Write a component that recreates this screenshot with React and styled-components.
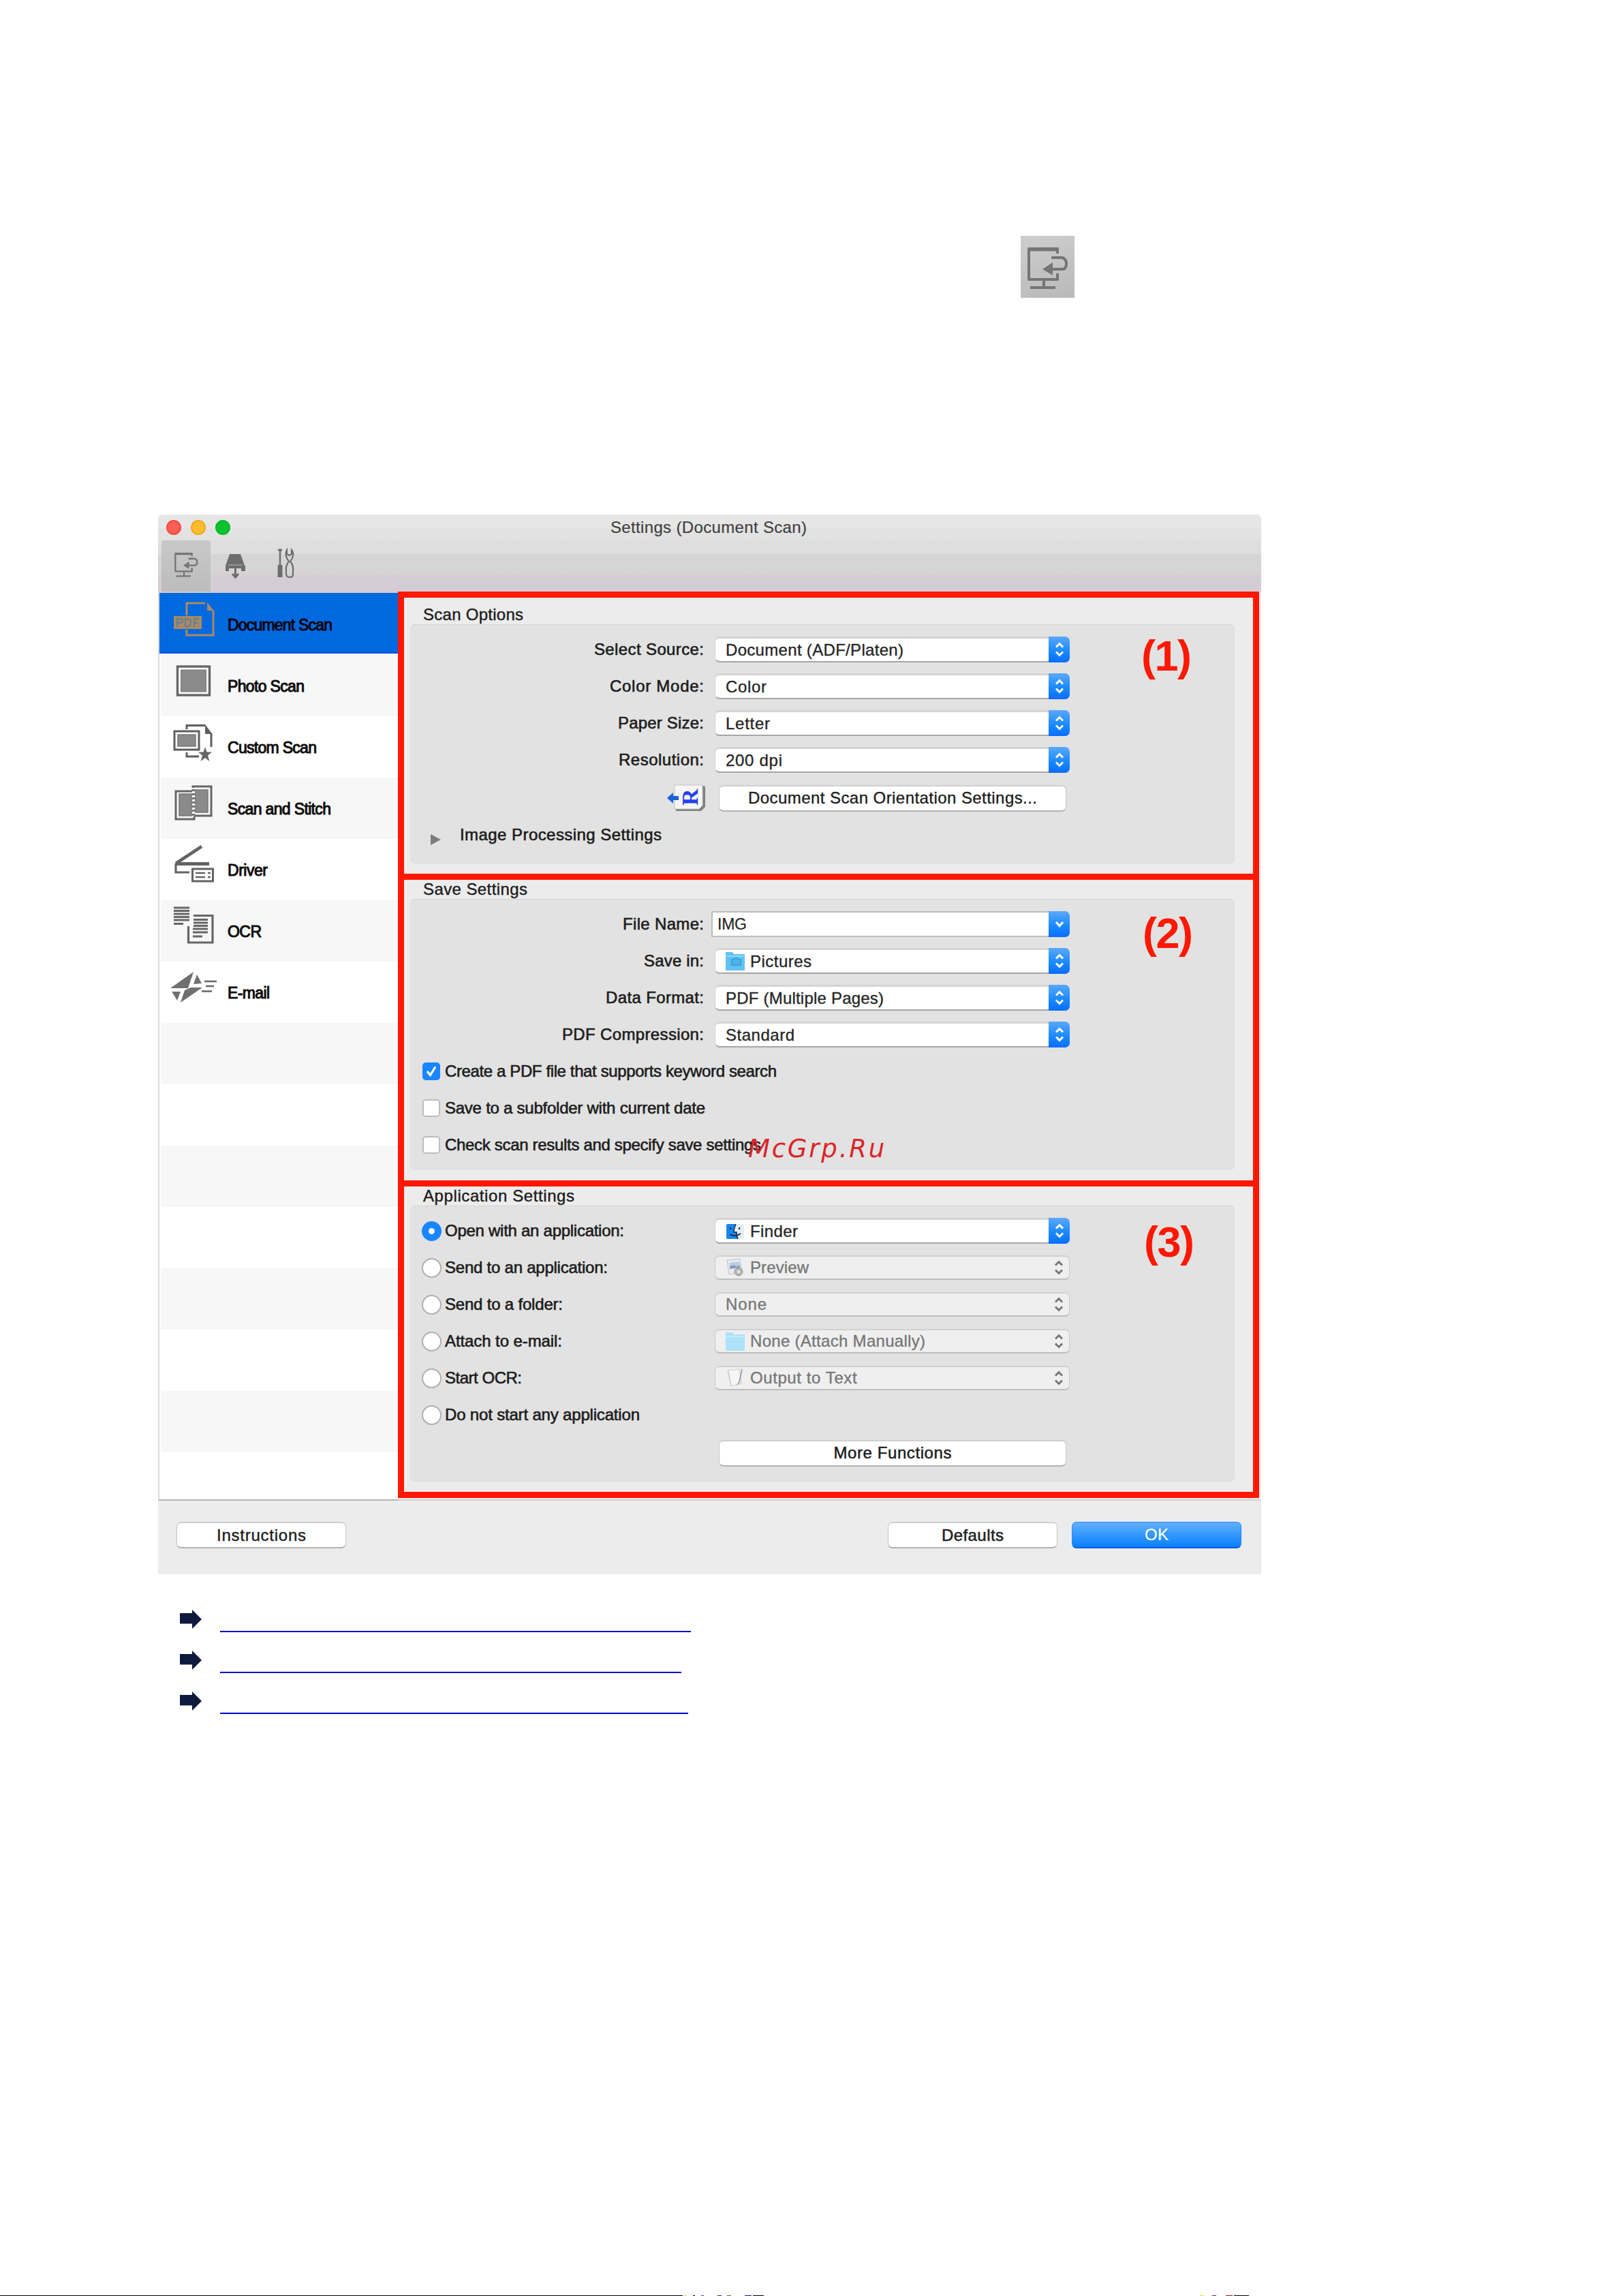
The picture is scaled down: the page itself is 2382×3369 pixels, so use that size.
import React from "react";
import styled, { createGlobalStyle, css } from "styled-components";

const FONT = '"Liberation Sans", Arial, Helvetica, sans-serif';

const Global = createGlobalStyle`
  * { box-sizing: border-box; }
  html, body { margin: 0; padding: 0; background: #fff; }
  body { font-family: ${FONT}; font-size: 24px; color: #1c1c1c; overflow: hidden; }
`;

/* ---------- text tracked to a given measure ---------- */

const pen = document.createElement("canvas").getContext("2d");

function tracking(text, width, size, bold) {
  pen.font = `${bold ? "bold " : ""}${size}px ${FONT}`;
  return (width - pen.measureText(text).width) / Math.max(1, text.length - 1);
}

const TextSpan = styled.span`
  display: block;
  white-space: nowrap;
  font-size: ${(p) => p.$size}px;
  font-weight: ${(p) => (p.$bold ? 700 : 400)};
  line-height: 28px;
  -webkit-text-stroke: ${(p) => p.$stroke}px currentColor;
`;

function Text({ w, size = 24, bold = false, stroke = 0.6, children }) {
  const ls = tracking(children, w, size, bold);
  return (
    <TextSpan $size={size} $bold={bold} $stroke={stroke} style={{ letterSpacing: ls, marginRight: -ls }}>
      {children}
    </TextSpan>
  );
}

/* ---------- page ---------- */

const Page = styled.div`
  width: 2382px;
  height: 3369px;
  display: flex;
  flex-direction: column;
  background: #fff;
`;

const InlineIconRow = styled.div`
  height: 755px;
  padding: 346px 0 0 1498px;
`;

const IconTile = styled.div`
  width: 79px;
  height: 91px;
  background: linear-gradient(160deg, #cecece, #b9b9b9);
`;

const Window = styled.div`
  width: 1619px;
  margin-left: 232px;
  height: 1555px;
  display: flex;
  flex-direction: column;
  background: #ececec;
  border-radius: 7px 7px 2px 2px;
  overflow: hidden;
`;

const Header = styled.div`
  height: 113px;
  background: linear-gradient(
    #e9e9e9 0, #e6e6e6 3px, #e6e6e6 19px, #e2e2e2 21px, #e2e2e2 36px, #dedede 40px,
    #dedede 57px, #d5d5d5 59px, #d5d5d5 84px, #d5cdd5 90px
  );
`;

const TitleBar = styled.div`
  height: 38px;
  display: grid;
  grid-template-columns: 200px 1fr 200px;
  align-items: center;
  color: #404040;
`;

const Lights = styled.div`
  display: flex;
  gap: 14px;
  padding-left: 12px;
`;

const Light = styled.i`
  width: 22px;
  height: 22px;
  border-radius: 50%;
  background: ${(p) => p.$c};
  border: 2px solid ${(p) => p.$b};
`;

const TitleSlot = styled.div`
  display: flex;
  justify-content: center;
  padding-right: 3px;
`;

const Toolbar = styled.div`
  display: flex;
  height: 75px;
  padding-left: 5px;
`;

const Tab = styled.div`
  width: ${(p) => p.$w}px;
  height: 75px;
  border-radius: 4px 4px 0 0;
  background: ${(p) => (p.$on ? "linear-gradient(#c8c8c8, #bcbcbc)" : "none")};
  svg { display: block; }
`;

const Body = styled.div`
  height: 1334px;
  display: flex;
`;

const Sidebar = styled.div`
  width: 352px;
  height: 1334px;
  border-left: 2px solid #d9d9d9;
  border-top: 2px solid #d2cdc8;
  border-bottom: 2px solid #b4b4b4;
  background: #fff;
  overflow: hidden;
`;

const SideRow = styled.div`
  height: 90px;
  margin-left: 2px;
  padding: 2px 0 0 10px;
  display: flex;
  align-items: center;
  color: #0c0c0c;
  background: ${(p) => (p.$alt ? "#f7f7f7" : "#fff")};
  ${(p) =>
    p.$on &&
    css`
      height: 89px;
      margin-left: -2px;
      margin-bottom: 2px;
      padding: 6px 0 0 14px;
      background: #0069e0;
      border-bottom: 2px solid #0050d8;
      color: #00060f;
    `}
  svg { flex: none; margin: -2px 8px 0 0; }
`;

const Main = styled.div`
  flex: 1;
  border-bottom: 2px solid #d2d2d2;
`;

const Section = styled.section`
  position: relative;
  width: 1264px;
  height: ${(p) => p.$h}px;
  border: 9px solid #ff1800;
  margin-top: ${(p) => (p.$first ? 0 : -9)}px;
`;

const SectionTitle = styled.div`
  height: ${(p) => p.$h}px;
  padding-left: 28px;
  display: flex;
  align-items: flex-end;
`;

const GroupBox = styled.div`
  width: 1210px;
  height: ${(p) => p.$h}px;
  margin-left: 9px;
  padding-top: 9px;
  background: #e2e2e2;
  border: 1px solid #dedede;
  border-top-color: #d3d3d3;
  border-radius: 7px;
`;

const Callout = styled.div`
  position: absolute;
  left: ${(p) => p.$x}px;
  top: ${(p) => p.$y}px;
  font-size: 63px;
  line-height: 70px;
  font-weight: 700;
  letter-spacing: -1.5px;
  color: #ff1800;
`;

const Row = styled.div`
  height: ${(p) => p.$h || 54}px;
  display: flex;
  align-items: center;
`;

const LabelCell = styled.div`
  width: 430px;
  margin-right: 16px;
  display: flex;
  justify-content: flex-end;
  align-items: center;
  svg { margin-right: -2px; }
`;

const OptionCell = styled.div`
  width: 446px;
  padding-left: 16px;
  display: flex;
  align-items: center;
`;

const SelectBox = styled.div`
  width: 521px;
  height: ${(p) => (p.$off ? 36 : 38)}px;
  display: flex;
  align-items: center;
  padding-left: 15px;
  border-radius: 7px;
  background: ${(p) => (p.$off ? "#efefef" : "#fff")};
  color: ${(p) => (p.$off ? "#777" : "#262626")};
  border: 1px solid ${(p) => (p.$off ? "#c9c9c9" : "#d0d0d0")};
  border-top: ${(p) => (p.$off ? "2px solid #d0d0d0" : "3px solid #d4d4d4")};
  border-bottom: 2px solid ${(p) => (p.$off ? "#bfbfbf" : "#a6a6a6")};
  border-right-width: ${(p) => (p.$off ? 1 : 0)}px;
  > svg { flex: none; }
`;

const ComboBox = styled(SelectBox)`
  width: 526px;
  margin-left: -5px;
  padding-left: 7px;
  border-radius: 0 7px 7px 0;
  border: 2px solid #bdbdbd;
  border-right: 0;
`;

const Stepper = styled.span`
  width: 31px;
  height: 38px;
  flex: none;
  margin: -3px 0 -2px auto;
  border-radius: 0 7px 7px 0;
  display: flex;
  align-items: center;
  justify-content: center;
  background: ${(p) => (p.$off ? "none" : "linear-gradient(#5ba8fb, #1788ff 60%, #0a6dff)")};
`;

const IconSlot = styled.span`
  width: 36px;
  height: 30px;
  flex: none;
  display: flex;
  align-items: center;
  svg { display: block; }
`;

const Button = styled.div`
  width: ${(p) => p.$w}px;
  height: 39px;
  display: flex;
  align-items: center;
  justify-content: center;
  margin-left: ${(p) => p.$ml || 0}px;
  border-radius: 7px;
  background: #fff;
  color: #1c1c1c;
  border: 1px solid #c6c6c6;
  border-top: 2px solid #cfcfcf;
  border-bottom: 2px solid #b3b3b3;
  ${(p) =>
    p.$primary &&
    css`
      background: linear-gradient(#63b0fc, #2a93fd 60%, #0b82ff);
      border: 1px solid #2a86f5;
      border-bottom: 2px solid #0a5cf0;
      color: #fff;
    `}
`;

const Check = styled.span`
  width: 26px;
  height: 26px;
  flex: none;
  margin: 0 7px 0 1px;
  border-radius: 5px;
  background: ${(p) => (p.$on ? "#1a86fd" : "#fff")};
  border: ${(p) => (p.$on ? "0" : "2px solid #bcbcbc")};
  svg { display: block; }
`;

const Radio = styled.span`
  width: 29px;
  height: 29px;
  flex: none;
  margin-right: 5px;
  border-radius: 50%;
  background: #fff;
  border: ${(p) => (p.$on ? "10px solid #1a86fd" : "2px solid #b0b0b0")};
`;

const Disclosure = styled.div`
  display: flex;
  align-items: center;
  padding-left: 29px;
  svg { margin: 13px 28px 0 0; }
`;

const Footer = styled.div`
  height: 108px;
  padding: 31px 29px 0 27px;
  display: flex;
`;

const Spacer = styled.div`
  flex: 1;
`;

const Links = styled.div`
  margin: 42px 0 0 264px;
`;

const LinkRow = styled.div`
  height: 60px;
  padding-top: 10px;
  display: flex;
  align-items: flex-start;
`;

const Underline = styled.a`
  width: ${(p) => p.$w}px;
  height: 33px;
  margin-left: 27px;
  border-bottom: 2px solid #0000cc;
`;

const Watermark = styled.div`
  position: absolute;
  left: 505px;
  top: 370px;
  z-index: 2;
  font: italic 37px/50px "DejaVu Sans", sans-serif;
  letter-spacing: 2.8px;
  white-space: nowrap;
  color: #dc2428;
`;

const PageEnd = styled.div`
  margin-top: auto;
  height: 1px;
  display: flex;
`;

const Dash = styled.span`
  width: ${(p) => p.$w}px;
  margin-left: ${(p) => p.$gap || 0}px;
  height: 1px;
  background: ${(p) => p.$c || "#000"};
`;

/* ---------- drawings ---------- */

const G = "#757575";

const MonitorArt = () => (
  <g fill="none" stroke={G}>
    <path d="M54 26V19H12V64H54V55" strokeWidth="4" strokeLinejoin="round" />
    <path d="M54 20H12" strokeWidth="5" />
    <path d="M45 32H61Q67 34 67 41Q67 49 61 49H45" strokeWidth="4" />
    <path d="M34 64V75M14 76H51" strokeWidth="4" />
    <path d="M32 49L47 39V58Z" fill={G} stroke="none" />
  </g>
);

const Chevrons = ({ c }) => (
  <svg width="16" height="24" viewBox="0 0 16 24" fill="none" stroke={c} strokeWidth="3">
    <path d="M3 8.5L8 3.5L13 8.5M3 15.5L8 20.5L13 15.5" />
  </svg>
);

const ChevronDown = () => (
  <svg width="16" height="12" viewBox="0 0 16 12" fill="none" stroke="#fff" strokeWidth="3.2">
    <path d="M3 3L8 8.5L13 3" />
  </svg>
);

const SideSvg = ({ top, children }) => (
  <svg width="80" height="90" viewBox={`246 ${top} 80 90`}>
    {children}
  </svg>
);

const PdfIcon = () => (
  <SideSvg top={871}>
    <g fill="none" stroke="#a98a62" strokeWidth="3">
      <path d="M274 903V885H301M313 896V932H274V924" />
      <path d="M304 884L314 896H304Z" fill="#a98a62" stroke="none" />
      <rect x="255" y="904" width="41" height="19" fill="#a98a62" stroke="none" />
      <path d="M260 920V908H265Q268 908 268 911Q268 914 265 914H260M272 908V919H275Q280 919 280 913.500Q280 908 275 908ZM285 920V908H292M285 914H291" stroke="#5c7f9c" strokeWidth="2" />
    </g>
  </SideSvg>
);

const PhotoIcon = () => (
  <SideSvg top={961}>
    <rect x="260.500" y="978" width="47" height="42" fill="#fff" stroke="#666" strokeWidth="3.4" />
    <rect x="265.500" y="983" width="37" height="32" fill="#8a8a8a" stroke="#777" />
  </SideSvg>
);

const CustomIcon = () => (
  <SideSvg top={1051}>
    <g fill="none" stroke="#5c5f5c" strokeWidth="3">
      <path d="M274 1070V1064.500H301M310 1076V1096M274 1104V1110H292" />
      <path d="M301 1063L311.500 1077H301Z" fill="#5c5f5c" stroke="none" />
      <rect x="256" y="1073" width="36" height="27" fill="#fff" />
      <rect x="261" y="1078" width="26" height="17" fill="#8a8a8a" stroke="#777" strokeWidth="1.500" />
      <path d="M301 1096L303.500 1103.500H311L305 1108.500L307.500 1117L301 1112L294.500 1117L297 1108.500L291 1103.500H298.500Z" fill="#666" stroke="none" />
    </g>
  </SideSvg>
);

const StitchIcon = () => (
  <SideSvg top={1141}>
    <g fill="none" stroke="#666" strokeWidth="3">
      <path d="M282 1161H258V1202H285V1198" />
      <path d="M283 1156V1154H310V1197H285" />
      <path d="M263 1165H281V1197H263Z" fill="#8a8a8a" stroke="#777" strokeWidth="1.500" />
      <path d="M287 1159H305V1192H287Z" fill="#8a8a8a" stroke="#777" strokeWidth="1.500" />
      <path d="M284 1158V1200" stroke="#777" strokeWidth="5" strokeDasharray="3 3" />
    </g>
  </SideSvg>
);

const DriverIcon = () => (
  <SideSvg top={1231}>
    <g fill="none" stroke="#626462">
      <path d="M258 1267L296 1242" strokeWidth="4.500" />
      <path d="M258 1267.500H307" strokeWidth="5" />
      <path d="M258 1267V1280H278" strokeWidth="3.200" />
      <rect x="282.500" y="1275" width="30" height="18" strokeWidth="3" fill="#fff" />
      <path d="M287 1281H301M287 1287H301M305 1281H309M305 1287H309" strokeWidth="2.400" />
    </g>
  </SideSvg>
);

const OcrIcon = () => (
  <SideSvg top={1321}>
    <g fill="none" stroke="#666" strokeWidth="2.800">
      <path d="M255 1332H278M255 1336.500H278M255 1341H278M255 1345.500H278M255 1350H278M255 1355.500H269" />
      <path d="M284 1343.500H312V1383H276.500V1359" strokeWidth="3.200" />
      <path d="M284 1349.500H305M284 1354H305M284 1358.500H305M283 1363H305M283 1368H305M283 1374H297" />
    </g>
  </SideSvg>
);

const MailIcon = () => (
  <SideSvg top={1411}>
    <g fill="#707070">
      <path d="M250 1450L284 1426L276 1450Z" />
      <path d="M289 1430L296 1443L284 1444Z" />
      <path d="M252 1455H265L260 1468Z" />
      <path d="M265 1471L271 1453L280 1449L297 1449Z" />
      <path d="M300 1440H318M302 1447H314M296 1454.500H311" stroke="#666" strokeWidth="2.600" />
    </g>
  </SideSvg>
);

const FolderIcon = ({ off }) => (
  <svg width="29" height="27" viewBox="0 0 29 27">
    <path d="M0 0H10L12 3H28V27H0Z" fill={off ? "#aee2fa" : "#62c1f2"} />
    <path d="M0 5H28V7H0Z" fill={off ? "#c3eafc" : "#8bd3f7"} />
    {!off && <path d="M9 11H12L14 9H17L19 11H22V19H9Z" fill="#50b4ea" stroke="#38a3dd" strokeWidth="2" />}
  </svg>
);

const FinderIcon = () => (
  <svg width="28" height="24" viewBox="0 0 28 24">
    <rect x="1" y="1" width="26" height="22" rx="2" fill="#e4ecf4" />
    <path d="M3 1H15Q12 8 12 13H16Q16 19 18 23H3Q1 23 1 21V3Q1 1 3 1Z" fill="#1a86f0" />
    <path d="M7 6V9M20 6V9M6 16Q14 21 22 15" fill="none" stroke="#1b2c44" strokeWidth="2" />
    <path d="M15 1Q12 8 12 13H16Q16 19 18 23" fill="none" stroke="#14283f" strokeWidth="1.500" />
  </svg>
);

const PreviewIcon = () => (
  <svg width="28" height="28" viewBox="0 0 28 28">
    <path d="M2 3L21 1L24 20L5 24Z" fill="#e6eaf0" stroke="#c2c2c2" />
    <path d="M5 7L20 5L21 13L6 15Z" fill="#bccde6" />
    <path d="M6 12L12 10L16 13L21 10L21 14L6 16Z" fill="#8a9bb8" />
    <circle cx="19" cy="20" r="6" fill="#b3b3b3" stroke="#999" />
    <circle cx="19" cy="20" r="2.500" fill="#e2e2e2" />
  </svg>
);

const NoteIcon = () => (
  <svg width="28" height="28" viewBox="0 0 28 28">
    <path d="M3 3L20 1L23 22L8 26Z" fill="#f6f6f6" stroke="#cfcac8" />
    <path d="M24 1L20 20L17 24" fill="none" stroke="#a6a6a6" strokeWidth="2" />
    <path d="M4 4L8 25" stroke="#d6cbc8" strokeWidth="1.500" />
  </svg>
);

const RotatedLetter = styled.text`
  font: bold 34px "Liberation Serif", "Times New Roman", serif;
  fill: #2440f0;
`;

const OrientationIcon = () => (
  <svg width="56" height="40" viewBox="0 0 56 40">
    <path d="M13 2H53Q56 2 56 5V33L50 39H13Z" fill="#808080" />
    <path d="M11 1H52V31L47 36H11Z" fill="#f6f6f6" stroke="#c4c4c4" />
    <path d="M0 20L9 12V17H17V23H9V28Z" fill="#1b62d6" />
    <RotatedLetter transform="translate(45 31) rotate(-90)">R</RotatedLetter>
  </svg>
);

const ArrowIcon = () => (
  <svg width="32" height="28" viewBox="0 0 32 28">
    <path d="M0 5H18V0L32 14L18 28V20.500H0Z" fill="#0e1a3d" />
  </svg>
);

/* ---------- pieces ---------- */

const Select = ({ w, children, off, icon }) => (
  <SelectBox $off={off}>
    {icon && <IconSlot>{icon}</IconSlot>}
    <Text w={w} stroke={0.35}>{children}</Text>
    <Stepper $off={off}>
      <Chevrons c={off ? "#777" : "#fff"} />
    </Stepper>
  </SelectBox>
);

const Field = ({ label, lw, children }) => (
  <Row>
    <LabelCell>
      <Text w={lw}>{label}</Text>
    </LabelCell>
    {children}
  </Row>
);

const CheckRow = ({ on, w, children }) => (
  <Row>
    <OptionCell>
      <Check $on={on}>
        {on && (
          <svg width="26" height="26" viewBox="0 0 26 26" fill="none" stroke="#fff" strokeWidth="3.200">
            <path d="M7 13L11.500 18.500L19 6.500" />
          </svg>
        )}
      </Check>
      <Text w={w}>{children}</Text>
    </OptionCell>
  </Row>
);

const RadioRow = ({ on, label, w, children }) => (
  <Row>
    <OptionCell>
      <Radio $on={on} />
      <Text w={w}>{label}</Text>
    </OptionCell>
    {children}
  </Row>
);

const SIDE = [
  ["Document Scan", 154, PdfIcon],
  ["Photo Scan", 113, PhotoIcon],
  ["Custom Scan", 131, CustomIcon],
  ["Scan and Stitch", 152, StitchIcon],
  ["Driver", 59, DriverIcon],
  ["OCR", 50, OcrIcon],
  ["E-mail", 62, MailIcon],
];

export default function App() {
  return (
    <Page>
      <Global />
      <InlineIconRow>
        <IconTile>
          <svg width="79" height="91" viewBox="0 0 79 91">
            <MonitorArt />
          </svg>
        </IconTile>
      </InlineIconRow>

      <Window>
        <Header>
          <TitleBar>
            <Lights>
              <Light $c="#ff5f57" $b="#f5483f" />
              <Light $c="#ffbd2e" $b="#f3a90f" />
              <Light $c="#0ac32d" $b="#05b826" />
            </Lights>
            <TitleSlot>
              <Text w={288} stroke={0.2}>Settings (Document Scan)</Text>
            </TitleSlot>
          </TitleBar>
          <Toolbar>
            <Tab $on $w={72}>
              <svg width="72" height="75" viewBox="-23 -14 124 129">
                <MonitorArt />
              </svg>
            </Tab>
            <Tab $w={76}>
              <svg width="76" height="75" viewBox="309 793 76 75">
                <path d="M337 813H353L359 830H331Z" fill="#6d6d6d" />
                <path d="M331 830H360V838H354V834H336V838H331Z" fill="#6d6d6d" />
                <path d="M345.500 833V846M341 842L345.500 847L350 842" fill="none" stroke="#6d6d6d" strokeWidth="3" />
                <path d="M335 829H356" stroke="#a0a0a0" strokeWidth="1.500" />
              </svg>
            </Tab>
            <Tab $w={76}>
              <svg width="76" height="75" viewBox="385 793 76 75" fill="none" stroke="#6d6d6d">
                <path d="M411 806V830" strokeWidth="2.500" />
                <path d="M408 807H414" strokeWidth="3" />
                <path d="M407.500 829H414.500V847H407.500Z" fill="#6d6d6d" stroke="none" />
                <path d="M421 807Q418 812 421 819L424 824Q419 829 420 838V843Q421 847 425 847Q430 847 430 843V838Q431 829 426 824L429 819Q432 812 428 807V813L425 815L421 813Z" strokeWidth="2.200" />
              </svg>
            </Tab>
          </Toolbar>
        </Header>

        <Body>
          <Sidebar>
            {SIDE.map(([name, w, Icon], i) => (
              <SideRow key={name} $on={i === 0} $alt={i % 2 === 1}>
                <Icon />
                <Text w={w} size={23} stroke={1}>{name}</Text>
              </SideRow>
            ))}
            {[0, 1, 2, 3, 4, 5, 6, 7].map((i) => (
              <SideRow key={i} $alt={i % 2 === 0} />
            ))}
          </Sidebar>

          <Main>
            <Section $h={423} $first>
              <SectionTitle $h={39}>
                <Text w={147} stroke={0.4}>Scan Options</Text>
              </SectionTitle>
              <GroupBox $h={351}>
                <Field label="Select Source:" lw={161}>
                  <Select w={261}>Document (ADF/Platen)</Select>
                </Field>
                <Field label="Color Mode:" lw={138}>
                  <Select w={60}>Color</Select>
                </Field>
                <Field label="Paper Size:" lw={126}>
                  <Select w={65}>Letter</Select>
                </Field>
                <Field label="Resolution:" lw={125}>
                  <Select w={83}>200 dpi</Select>
                </Field>
                <Row $h={58}>
                  <LabelCell>
                    <OrientationIcon />
                  </LabelCell>
                  <Button $w={510} $ml={6}>
                    <Text w={424} stroke={0.35}>Document Scan Orientation Settings...</Text>
                  </Button>
                </Row>
                <Row $h={50}>
                  <Disclosure>
                    <svg width="15" height="16" viewBox="0 0 15 16">
                      <path d="M0 0L15 8L0 16Z" fill="#7d7d7d" />
                    </svg>
                    <Text w={296}>Image Processing Settings</Text>
                  </Disclosure>
                </Row>
              </GroupBox>
              <Callout $x={1082} $y={50}>(1)</Callout>
            </Section>

            <Section $h={459}>
              <SectionTitle $h={28}>
                <Text w={153} stroke={0.4}>Save Settings</Text>
              </SectionTitle>
              <GroupBox $h={398}>
                <Field label="File Name:" lw={119}>
                  <ComboBox>
                    <Text w={43} size={23} stroke={0.2}>IMG</Text>
                    <Stepper>
                      <ChevronDown />
                    </Stepper>
                  </ComboBox>
                </Field>
                <Field label="Save in:" lw={88}>
                  <Select w={90} icon={<FolderIcon />}>Pictures</Select>
                </Field>
                <Field label="Data Format:" lw={144}>
                  <Select w={232}>PDF (Multiple Pages)</Select>
                </Field>
                <Field label="PDF Compression:" lw={208}>
                  <Select w={101}>Standard</Select>
                </Field>
                <CheckRow on w={487}>Create a PDF file that supports keyword search</CheckRow>
                <CheckRow w={382}>Save to a subfolder with current date</CheckRow>
                <CheckRow w={464}>Check scan results and specify save settings</CheckRow>
              </GroupBox>
              <Callout $x={1084} $y={43}>(2)</Callout>
              <Watermark>McGrp.Ru</Watermark>
            </Section>

            <Section $h={466}>
              <SectionTitle $h={28}>
                <Text w={222} stroke={0.4}>Application Settings</Text>
              </SectionTitle>
              <GroupBox $h={405}>
                <RadioRow on label="Open with an application:" w={263}>
                  <Select w={70} icon={<FinderIcon />}>Finder</Select>
                </RadioRow>
                <RadioRow label="Send to an application:" w={239}>
                  <Select off w={86} icon={<PreviewIcon />}>Preview</Select>
                </RadioRow>
                <RadioRow label="Send to a folder:" w={173}>
                  <Select off w={60}>None</Select>
                </RadioRow>
                <RadioRow label="Attach to e-mail:" w={172}>
                  <Select off w={257} icon={<FolderIcon off />}>None (Attach Manually)</Select>
                </RadioRow>
                <RadioRow label="Start OCR:" w={113}>
                  <Select off w={157} icon={<NoteIcon />}>Output to Text</Select>
                </RadioRow>
                <RadioRow label="Do not start any application" w={286} />
                <Row $h={58}>
                  <OptionCell />
                  <Button $w={510} $ml={6}>
                    <Text w={173} stroke={0.5}>More Functions</Text>
                  </Button>
                </Row>
              </GroupBox>
              <Callout $x={1086} $y={46}>(3)</Callout>
            </Section>
          </Main>
        </Body>

        <Footer>
          <Button $w={249}>
            <Text w={131} stroke={0.4}>Instructions</Text>
          </Button>
          <Spacer />
          <Button $w={249}>
            <Text w={91} stroke={0.5}>Defaults</Text>
          </Button>
          <Button $w={249} $ml={21} $primary>
            <Text w={35} stroke={0.2}>OK</Text>
          </Button>
        </Footer>
      </Window>

      <Links>
        {[691, 677, 687].map((w) => (
          <LinkRow key={w}>
            <ArrowIcon />
            <Underline $w={w} />
          </LinkRow>
        ))}
      </Links>

      <PageEnd>
        <Dash $w={1002} />
        <Dash $w={3} $gap={2} $c="#cc3" />
        <Dash $w={3} $gap={10} />
        <Dash $w={4} $gap={9} $c="#44a" />
        <Dash $w={6} $gap={20} $c="#336" />
        <Dash $w={6} $gap={8} $c="#663" />
        <Dash $w={10} $gap={20} $c="#128" />
        <Dash $w={16} $gap={2} />
        <Dash $w={6} $gap={640} $c="#dd4" />
        <Dash $w={6} $gap={12} $c="#633" />
        <Dash $w={10} $gap={14} $c="#722" />
        <Dash $w={22} $gap={2} />
      </PageEnd>
    </Page>
  );
}
